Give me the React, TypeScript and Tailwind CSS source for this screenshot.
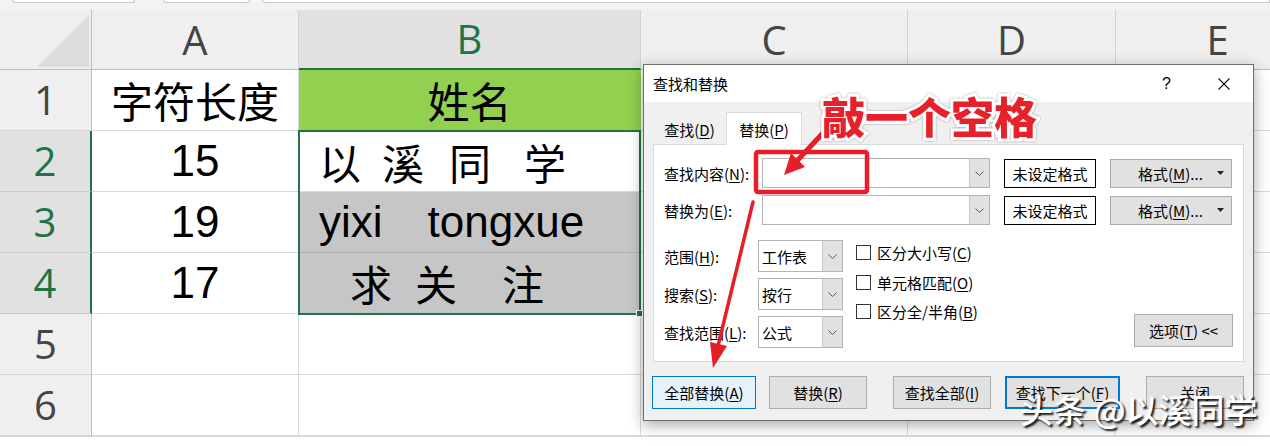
import React from "react";

function U({ c }: { c: string }) {
  return <span className="underline underline-offset-[2px] decoration-1">{c}</span>;
}

function Chevron() {
  return (
    <svg width="9" height="5" viewBox="0 0 9 5" className="block">
      <polyline points="0.5,0.5 4.5,4.5 8.5,0.5" fill="none" stroke="#5a5a5a" strokeWidth="1" />
    </svg>
  );
}

function DropTri() {
  return (
    <svg width="7" height="4" viewBox="0 0 7 4" className="block">
      <polygon points="0,0 7,0 3.5,4" fill="#222" />
    </svg>
  );
}

function Checkbox({ children }: { children: React.ReactNode }) {
  return (
    <div className="h-[29.5px] flex items-center">
      <div className="w-[15px] h-[15px] border border-[#333] bg-white" />
      <span className="ml-[6px]">{children}</span>
    </div>
  );
}

function OptCombo({ label, value }: { label: React.ReactNode; value: string }) {
  return (
    <div className="flex items-center h-[32px]">
      <div className="w-[94px]">{label}</div>
      <div className="w-[85px] h-[32px] border border-[#b4b4b4] bg-white flex">
        <div className="flex-1 flex items-center pl-[3px]">{value}</div>
        <div className="w-[20px] bg-[#e1e1e1] border-l border-[#c8c8c8] flex items-center justify-center">
          <Chevron />
        </div>
      </div>
    </div>
  );
}

function FindRow({ label, mt }: { label: React.ReactNode; mt: string }) {
  return (
    <div className={"flex items-center h-[30px] " + mt}>
      <div className="w-[98px]">{label}</div>
      <div className="w-[228px] h-[30px] border border-[#b4b4b4] bg-white flex">
        <div className="flex-1" />
        <div className="w-[20px] bg-[#e1e1e1] border-l border-[#c8c8c8] flex items-center justify-center">
          <Chevron />
        </div>
      </div>
      <div className="ml-[14px] w-[92px] h-[29px] border border-black bg-white flex items-center justify-center">
        未设定格式
      </div>
      <div className="ml-[14px] w-[122px] h-[29px] border border-[#adadad] bg-[#e1e1e1] flex items-center">
        <span className="ml-[27px]">
          格式(<U c="M" />)...
        </span>
        <span className="ml-auto mr-[7px]">
          <DropTri />
        </span>
      </div>
    </div>
  );
}

export default function App() {
  const hdr = "bg-[#efefef] border-r border-b border-r-[#d0d0d0] border-b-[#bdbdbd] flex items-center justify-center text-[40px] text-[#444]";
  const rowHdr = "bg-[#efefef] border-r border-b border-r-[#bdbdbd] border-b-[#d4d4d4] flex items-center justify-center text-[40px] text-[#444]";
  const rowHdrSel = "bg-[#e1e1e1] border-r-2 border-b border-r-[#217346] border-b-[#c8c8c8] flex items-center justify-center text-[40px] text-[#217346]";
  const cell = "bg-white border-r border-b border-[#dadada]";
  const numCell = "bg-white border-r border-b border-[#dadada] flex items-center justify-center text-[44px] text-black font-['Liberation_Sans',sans-serif]";
  const cjk = "font-['Noto_Sans_CJK_SC',sans-serif]";

  return (
    <div className="relative w-[1270px] h-[446px] overflow-hidden bg-white">
      {/* toolbar remnants */}
      <div className="h-[10px] bg-[#f3f3f3] flex items-start">
        <div className="ml-[12px] w-[123px] h-[3px] bg-white border border-t-0 border-[#c8c8c8] rounded-b-[3px]" />
        <div className="ml-[28px] w-[87px] h-[3px] bg-white border border-t-0 border-[#c8c8c8] rounded-b-[3px]" />
        <div className="ml-[12px] flex-1 h-[3px] bg-white border border-t-0 border-[#c8c8c8] rounded-bl-[3px]" />
      </div>

      {/* sheet */}
      <div className="grid grid-cols-[92px_207px_342px_267px_208px_204px] grid-rows-[60px_61px_61px_61px_61px_61px_61px] font-['Open_Sans',sans-serif] leading-none">
        {/* header row */}
        <div className="bg-[#efefef] border-r border-b border-[#bdbdbd]">
          <svg width="91" height="59" viewBox="0 0 91 59" className="block">
            <polygon points="89,5 89,57 37,57" fill="#dcdcdc" />
          </svg>
        </div>
        <div className={hdr}>A</div>
        <div className="bg-[#e1e1e1] border-r border-b-2 border-r-[#d0d0d0] border-b-[#217346] flex items-center justify-center text-[40px] text-[#217346]">
          B
        </div>
        <div className={hdr}>C</div>
        <div className={hdr}>D</div>
        <div className={hdr}>E</div>

        {/* row 1 */}
        <div className={rowHdr}>1</div>
        <div className={"bg-white border-r border-b border-[#dadada] flex items-center justify-center text-[42px] text-black " + cjk}>
          字符长度
        </div>
        <div className={"bg-[#92d050] border-r border-b border-[#92d050] flex items-center justify-center text-[42px] text-black " + cjk}>
          姓名
        </div>
        <div className={cell} />
        <div className={cell} />
        <div className={cell} />

        {/* row 2 */}
        <div className={rowHdrSel}>2</div>
        <div className={numCell}>15</div>
        <div className="row-span-3 relative -ml-px -mt-px -mb-px border-2 border-[#217346] flex flex-col z-10">
          <div className={"h-[60px] bg-white border-b border-[#dadada] flex items-center pl-[19px] text-[42px] text-black " + cjk}>
            <span>以</span>
            <span className="ml-[21px]">溪</span>
            <span className="ml-[25px]">同</span>
            <span className="ml-[33px]">学</span>
          </div>
          <div className="h-[61px] bg-[#c6c6c6] border-b border-[#b0b0b0] flex items-center pl-[19px] text-[44px] text-black font-['Liberation_Sans',sans-serif]">
            <span>yixi</span>
            <span className="ml-[45px]">tongxue</span>
          </div>
          <div className={"flex-1 bg-[#c6c6c6] flex items-center pl-[50px] text-[42px] text-black " + cjk}>
            <span>求</span>
            <span className="ml-[23px]">关</span>
            <span className="ml-[45px]">注</span>
          </div>
          <div className="absolute -right-[4px] -bottom-[4px] w-[7px] h-[7px] bg-[#217346] border border-white" />
        </div>
        <div className={cell} />
        <div className={cell} />
        <div className={cell} />

        {/* row 3 */}
        <div className={rowHdrSel}>3</div>
        <div className={numCell}>19</div>
        <div className={cell} />
        <div className={cell} />
        <div className={cell} />

        {/* row 4 */}
        <div className={rowHdrSel}>4</div>
        <div className={numCell}>17</div>
        <div className={cell} />
        <div className={cell} />
        <div className={cell} />

        {/* row 5 */}
        <div className={rowHdr}>5</div>
        <div className={cell} />
        <div className={cell} />
        <div className={cell} />
        <div className={cell} />
        <div className={cell} />

        {/* row 6 */}
        <div className={rowHdr}>6</div>
        <div className={cell} />
        <div className={cell} />
        <div className={cell} />
        <div className={cell} />
        <div className={cell} />

        {/* row 7 (partly visible) */}
        <div className={rowHdr} />
        <div className={cell} />
        <div className={cell} />
        <div className={cell} />
        <div className={cell} />
        <div className={cell} />
      </div>

      {/* dialog */}
      <div className="absolute left-[643px] top-[64px] w-[611px] h-[357px] border border-[#6d6d6d] bg-[#f0f0f0] shadow-[0_4px_14px_rgba(0,0,0,0.35)] font-['Noto_Sans_CJK_SC',sans-serif] text-[15px] text-black leading-none flex flex-col z-20">
        <div className="h-[37px] bg-white flex items-center pl-[9px]">
          <span>查找和替换</span>
          <span className="ml-auto text-[16px] font-['Liberation_Sans',sans-serif]">?</span>
          <svg width="12" height="12" viewBox="0 0 12 12" className="block ml-[47px] mr-[23px]">
            <line x1="0.5" y1="0.5" x2="11.5" y2="11.5" stroke="#111" strokeWidth="1.1" />
            <line x1="11.5" y1="0.5" x2="0.5" y2="11.5" stroke="#111" strokeWidth="1.1" />
          </svg>
        </div>
        <div className="flex-1 flex flex-col px-[9px]">
          <div className="h-[42px] flex items-end">
            <div className="w-[73px] h-[29px] flex items-center justify-center">
              <span>
                查找(<U c="D" />)
              </span>
            </div>
            <div className="w-[76px] h-[33px] bg-white border border-b-0 border-[#d9d9d9] relative z-10 -mb-px flex items-center justify-center">
              <span>
                替换(<U c="P" />)
              </span>
            </div>
          </div>
          <div className="h-[218px] border border-[#d9d9d9] bg-white px-[10px] pt-[13px] flex flex-col">
            <FindRow
              mt=""
              label={
                <span>
                  查找内容(<U c="N" />):
                </span>
              }
            />
            <FindRow
              mt="mt-[7px]"
              label={
                <span>
                  替换为(<U c="E" />):
                </span>
              }
            />
            <div className="mt-[15px] flex">
              <div className="flex flex-col gap-[6px]">
                <OptCombo
                  label={
                    <span>
                      范围(<U c="H" />):
                    </span>
                  }
                  value="工作表"
                />
                <OptCombo
                  label={
                    <span>
                      搜索(<U c="S" />):
                    </span>
                  }
                  value="按行"
                />
                <OptCombo
                  label={
                    <span>
                      查找范围(<U c="L" />):
                    </span>
                  }
                  value="公式"
                />
              </div>
              <div className="ml-[13px] -mt-[2px] flex flex-col">
                <Checkbox>
                  区分大小写(<U c="C" />)
                </Checkbox>
                <Checkbox>
                  单元格匹配(<U c="O" />)
                </Checkbox>
                <Checkbox>
                  区分全/半角(<U c="B" />)
                </Checkbox>
              </div>
              <div className="ml-auto self-end mb-px w-[99px] h-[33px] border border-[#adadad] bg-[#e1e1e1] flex items-center justify-center">
                <span>
                  选项(<U c="T" />) &lt;&lt;
                </span>
              </div>
            </div>
          </div>
          <div className="mt-[14px] -ml-px flex">
            <div className="w-[104px] h-[33px] border border-[#0078d7] bg-[#e5f1fb] flex items-center justify-center">
              <span>
                全部替换(<U c="A" />)
              </span>
            </div>
            <div className="ml-[13px] w-[98px] h-[33px] border border-[#adadad] bg-[#e1e1e1] flex items-center justify-center">
              <span>
                替换(<U c="R" />)
              </span>
            </div>
            <div className="ml-[26px] w-[98px] h-[33px] border border-[#adadad] bg-[#e1e1e1] flex items-center justify-center">
              <span>
                查找全部(<U c="I" />)
              </span>
            </div>
            <div className="ml-[14px] w-[115px] h-[33px] border-2 border-[#0078d7] bg-[#e1e1e1] flex items-center justify-center">
              <span>
                查找下一个(<U c="F" />)
              </span>
            </div>
            <div className="ml-[26px] w-[98px] h-[33px] border border-[#adadad] bg-[#e1e1e1] flex items-center justify-center">
              <span>关闭</span>
            </div>
          </div>
        </div>
      </div>

      {/* red annotations */}
      <svg width="1270" height="446" viewBox="0 0 1270 446" className="absolute left-0 top-0 z-30 pointer-events-none">
        <rect x="756" y="152" width="111" height="40" rx="2" fill="none" stroke="#e61e28" strokeWidth="4.5" />
        <line x1="823" y1="133" x2="795" y2="163" stroke="#e61e28" strokeWidth="5" strokeLinecap="round" />
        <polygon points="784,175 805,167 791,153" fill="#e61e28" />
        <line x1="753" y1="202" x2="718" y2="346" stroke="#e61e28" strokeWidth="3.5" strokeLinecap="round" />
        <polygon points="713,368 727,346 710,342" fill="#e61e28" />
      </svg>
      <div className="absolute left-[822px] top-[94px] z-40 text-[43px] leading-none font-black text-[#e8202a] font-['Noto_Sans_CJK_SC',sans-serif] [-webkit-text-stroke:6px_#fff] [paint-order:stroke_fill] [filter:drop-shadow(0_0_1px_rgba(0,0,0,0.35))] whitespace-nowrap">
        敲一个空格
      </div>

      {/* watermark */}
      <div className="absolute left-[1020px] top-[393px] z-40 text-[33px] leading-none font-medium text-white font-['Noto_Sans_CJK_SC',sans-serif] [text-shadow:2px_2px_2px_rgba(0,0,0,0.9)] whitespace-pre">
        头条 @以溪同学
      </div>
    </div>
  );
}
